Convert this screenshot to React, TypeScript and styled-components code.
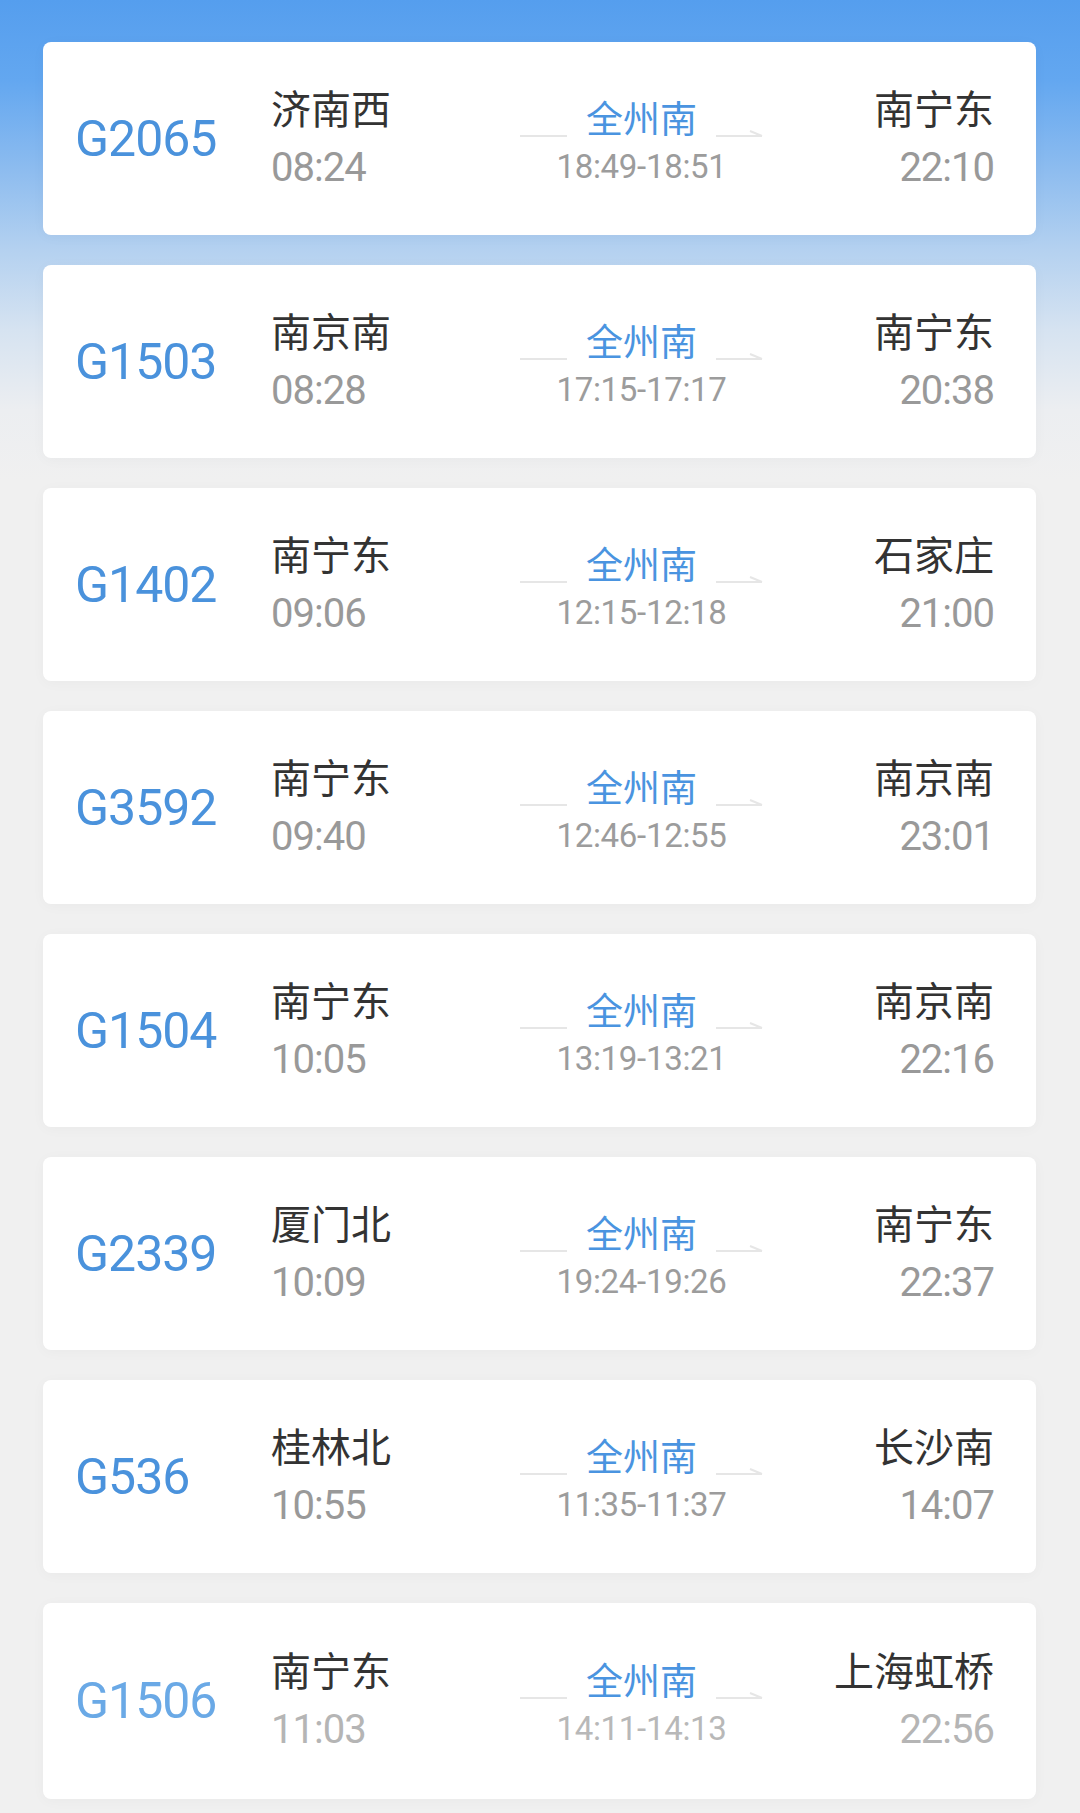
import React from 'react';
import styled, { createGlobalStyle } from 'styled-components';

const GlobalStyle = createGlobalStyle`
  html, body {
    margin: 0;
    padding: 0;
    background: #f0f0f0;
  }
  body {
    font-family: Roboto, "Noto Sans CJK SC", "Noto Sans", sans-serif;
  }
`;

const Page = styled.div`
  min-height: 1813px;
  box-sizing: border-box;
  padding: 42px 44px 14px 43px;
  display: flex;
  flex-direction: column;
  gap: 30px;
  background: linear-gradient(
    180deg,
    #559eee 0px,
    #63a7f0 80px,
    #8dbcef 170px,
    #b4d1f0 250px,
    #d6e3f1 330px,
    #eceef1 410px,
    #f0f0f0 480px,
    #f0f0f0 100%
  );
`;

const Card = styled.div<{ $tall?: boolean }>`
  height: ${(p) => (p.$tall ? '196px' : '193px')};
  box-sizing: border-box;
  background: #ffffff;
  border-radius: 8px;
  box-shadow: 0 2px 14px rgba(0, 0, 0, 0.03);
  display: flex;
  align-items: center;
  padding: 0 42px 0 32px;
`;

const TrainNo = styled.div<{ $faded?: boolean }>`
  width: 196px;
  flex-shrink: 0;
  font-family: Roboto, sans-serif;
  font-size: 50px;
  letter-spacing: -1px;
  color: ${(p) => (p.$faded ? '#6aa9e6' : '#4a92dc')};
`;

const StopCol = styled.div<{ $right?: boolean }>`
  display: flex;
  flex-direction: column;
  gap: 9px;
  margin-bottom: 3px;
  align-items: ${(p) => (p.$right ? 'flex-end' : 'flex-start')};
  ${(p) => (p.$right ? 'flex: 1;' : 'width: 249px; flex-shrink: 0;')}
`;

const StationName = styled.div`
  font-family: "Noto Sans CJK SC", sans-serif;
  font-size: 40px;
  line-height: 52px;
  color: #333333;
  white-space: nowrap;
`;

const Time = styled.div<{ $faded?: boolean }>`
  font-family: Roboto, sans-serif;
  font-size: 40px;
  line-height: 52px;
  letter-spacing: -1px;
  color: ${(p) => (p.$faded ? '#b5b5b5' : '#999999')};
`;

const Via = styled.div`
  width: 243px;
  flex-shrink: 0;
  display: flex;
  flex-direction: column;
  align-items: center;
  gap: 8px;
  margin-top: 4px;
`;

const ViaRow = styled.div`
  display: flex;
  align-items: flex-end;
  gap: 19px;
`;

const ViaName = styled.div`
  font-family: "Noto Sans CJK SC", sans-serif;
  font-size: 37px;
  line-height: 44px;
  color: #4a94e0;
  white-space: nowrap;
`;

const ViaTime = styled.div<{ $faded?: boolean }>`
  font-family: Roboto, sans-serif;
  font-size: 33px;
  line-height: 40px;
  letter-spacing: -0.3px;
  color: ${(p) => (p.$faded ? '#b8b8b8' : '#9c9c9c')};
`;

const Track = styled.svg`
  display: block;
  margin-bottom: 1px;
  flex-shrink: 0;
`;

const LineLeft = () => (
  <Track width="47" height="10" viewBox="0 0 47 10">
    <line x1="0" y1="8" x2="47" y2="8" stroke="#e6e6e6" strokeWidth="2" />
  </Track>
);

const LineRight = () => (
  <Track width="47" height="10" viewBox="0 0 47 10">
    <line x1="0" y1="8" x2="46" y2="8" stroke="#e6e6e6" strokeWidth="2" />
    <line x1="34" y1="3" x2="46" y2="8" stroke="#e6e6e6" strokeWidth="2" />
  </Track>
);

type Train = {
  no: string;
  from: string;
  dep: string;
  via: string;
  viaTime: string;
  to: string;
  arr: string;
};

const trains: Train[] = [
  { no: 'G2065', from: '济南西', dep: '08:24', via: '全州南', viaTime: '18:49-18:51', to: '南宁东', arr: '22:10' },
  { no: 'G1503', from: '南京南', dep: '08:28', via: '全州南', viaTime: '17:15-17:17', to: '南宁东', arr: '20:38' },
  { no: 'G1402', from: '南宁东', dep: '09:06', via: '全州南', viaTime: '12:15-12:18', to: '石家庄', arr: '21:00' },
  { no: 'G3592', from: '南宁东', dep: '09:40', via: '全州南', viaTime: '12:46-12:55', to: '南京南', arr: '23:01' },
  { no: 'G1504', from: '南宁东', dep: '10:05', via: '全州南', viaTime: '13:19-13:21', to: '南京南', arr: '22:16' },
  { no: 'G2339', from: '厦门北', dep: '10:09', via: '全州南', viaTime: '19:24-19:26', to: '南宁东', arr: '22:37' },
  { no: 'G536', from: '桂林北', dep: '10:55', via: '全州南', viaTime: '11:35-11:37', to: '长沙南', arr: '14:07' },
  { no: 'G1506', from: '南宁东', dep: '11:03', via: '全州南', viaTime: '14:11-14:13', to: '上海虹桥', arr: '22:56' }
];

const TrainCard = ({ t, faded }: { t: Train; faded?: boolean }) => (
  <Card $tall={faded}>
    <TrainNo $faded={faded}>{t.no}</TrainNo>
    <StopCol>
      <StationName>{t.from}</StationName>
      <Time $faded={faded}>{t.dep}</Time>
    </StopCol>
    <Via>
      <ViaRow>
        <LineLeft />
        <ViaName>{t.via}</ViaName>
        <LineRight />
      </ViaRow>
      <ViaTime $faded={faded}>{t.viaTime}</ViaTime>
    </Via>
    <StopCol $right>
      <StationName>{t.to}</StationName>
      <Time $faded={faded}>{t.arr}</Time>
    </StopCol>
  </Card>
);

export default function App() {
  return (
    <>
      <GlobalStyle />
      <Page>
        {trains.map((t, i) => (
          <TrainCard key={t.no} t={t} faded={i === trains.length - 1} />
        ))}
      </Page>
    </>
  );
}
